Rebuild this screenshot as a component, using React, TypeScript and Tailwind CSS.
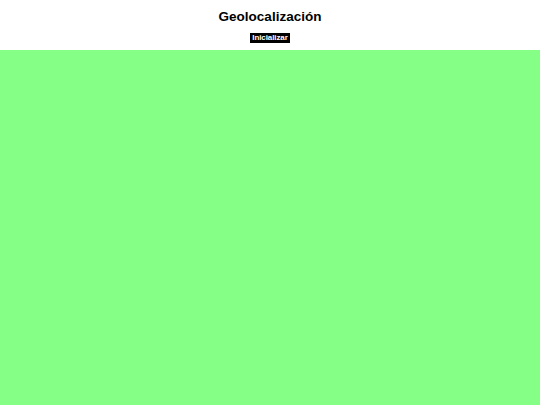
export default function App() {
  return (
    <div className="flex h-[405px] w-[540px] flex-col bg-white font-['Liberation_Sans',Arial,sans-serif]">
      <div className="flex h-[50px] flex-col items-center">
        <h1 className="mt-[8px] text-[13.5px] font-bold leading-[17px] text-black">Geolocalización</h1>
        <button className="mt-[8px] bg-black px-[2px] text-[8px] font-bold leading-[10px] tracking-[-0.1px] text-white">
          Inicializar
        </button>
      </div>
      <div className="flex-1 bg-[#86ff86]" />
    </div>
  );
}
